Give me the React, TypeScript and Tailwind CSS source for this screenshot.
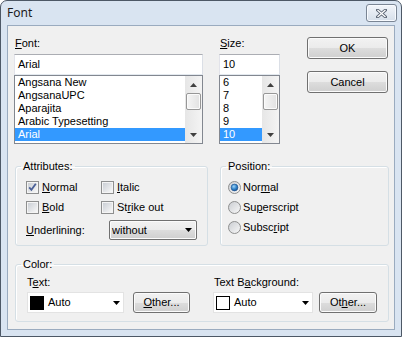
import React from 'react';

function U({ children }: { children: React.ReactNode }) {
  return <span className="underline decoration-1 underline-offset-[1px]">{children}</span>;
}

function Arrow({ dir = 'down' }: { dir?: 'up' | 'down' }) {
  return (
    <svg width="7" height="4" viewBox="0 0 7 4">
      {dir === 'up' ? <path d="M3.5 0 L7 4 L0 4 Z" fill="#404040" /> : <path d="M0 0 L7 0 L3.5 4 Z" fill="#000" />}
    </svg>
  );
}

function ScrollBar() {
  return (
    <div className="w-[17px] flex flex-col bg-[linear-gradient(to_right,#e6e6e6,#f4f4f4)]">
      <div className="h-[17px] flex items-center justify-center">
        <Arrow dir="up" />
      </div>
      <div className="flex-1 px-[1px]">
        <div className="h-[17px] rounded-[2px] border border-[#979797] bg-[linear-gradient(to_right,#f5f5f5,#e2e2e2)] shadow-[inset_0_0_0_1px_#fbfbfb]" />
      </div>
      <div className="h-[17px] flex items-center justify-center">
        <svg width="7" height="4" viewBox="0 0 7 4">
          <path d="M0 0 L7 0 L3.5 4 Z" fill="#404040" />
        </svg>
      </div>
    </div>
  );
}

function ListBox({ items, selected, width }: { items: string[]; selected: string; width: string }) {
  return (
    <div className={`${width} h-[69px] border border-[#828790] bg-white flex`}>
      <div className="flex-1 pt-0 pl-0">
        {items.map((it) => (
          <div
            key={it}
            className={`h-[13px] leading-[13px] pl-[3px] whitespace-nowrap ${
              it === selected ? 'bg-[#3399ff] text-white' : ''
            }`}
          >
            {it}
          </div>
        ))}
      </div>
      <ScrollBar />
    </div>
  );
}

function Button({ children, width, height = 'h-[22px]' }: { children: React.ReactNode; width: string; height?: string }) {
  return (
    <div
      className={`${width} ${height} flex items-center justify-center rounded-[3px] border border-[#707070] bg-[linear-gradient(#f2f2f2_0%,#ebebeb_50%,#dddddd_50%,#cfcfcf_100%)] shadow-[inset_0_0_0_1px_#fbfbfb]`}
    >
      {children}
    </div>
  );
}

function CheckBox({ checked = false }: { checked?: boolean }) {
  return (
    <svg width="13" height="13" viewBox="0 0 13 13">
      <defs>
        <linearGradient id="cbg" x1="0" y1="0" x2="1" y2="1">
          <stop offset="0" stopColor="#cbcfd5" />
          <stop offset="1" stopColor="#f7f7f7" />
        </linearGradient>
      </defs>
      <rect x="0.5" y="0.5" width="12" height="12" fill="#f4f4f4" stroke="#8e8f8f" />
      <rect x="2" y="2" width="9" height="9" fill="url(#cbg)" />
      {checked && <path d="M3.2 6.3 L5.4 8.8 L9.8 2.8" stroke="#4a5f97" strokeWidth="1.8" fill="none" />}
    </svg>
  );
}

function Radio({ checked = false }: { checked?: boolean }) {
  return (
    <svg width="13" height="13" viewBox="0 0 13 13">
      <defs>
        <linearGradient id="rbg" x1="0" y1="0" x2="1" y2="1">
          <stop offset="0" stopColor="#c9ccd1" />
          <stop offset="1" stopColor="#f9f9f9" />
        </linearGradient>
        <radialGradient id="rsel" cx="0.4" cy="0.35" r="0.7">
          <stop offset="0" stopColor="#9fd4f7" />
          <stop offset="0.6" stopColor="#2c7fc6" />
          <stop offset="1" stopColor="#1b4f8d" />
        </radialGradient>
      </defs>
      <circle cx="6.5" cy="6.5" r="6" fill="url(#rbg)" stroke="#8e8f8f" />
      {checked && <circle cx="6.5" cy="6.5" r="3.4" fill="url(#rsel)" stroke="#1b4f8d" strokeWidth="0.6" />}
    </svg>
  );
}

function Group({ label, className, children }: { label: string; className: string; children: React.ReactNode }) {
  return (
    <fieldset className={`${className} border border-[#d5dfe5] rounded-[3px] shadow-[inset_1px_1px_0_#fff] px-0`}>
      <legend className="ml-[5px] px-[2px] h-[13px] leading-[13px]">{label}</legend>
      {children}
    </fieldset>
  );
}

function ColorCombo({ width, swatch }: { width: string; swatch: string }) {
  return (
    <div className={`${width} h-[21px] flex items-center bg-white border border-[#e3e3e3] pl-[2px] pr-[3px]`}>
      <div className={`w-[14px] h-[14px] ${swatch}`} />
      <span className="ml-[4px] flex-1">Auto</span>
      <Arrow />
    </div>
  );
}

export default function App() {
  return (
    <div className="w-[402px] h-[337px] flex flex-col rounded-t-[7px] border border-[#4d5866] bg-[#d9e4f1] font-['Liberation_Sans',Arial,sans-serif] text-[11px] text-black">
      {/* Title bar */}
      <div className="h-[24px] flex items-center justify-between pl-[6px] pr-[4px]">
        <span className="font-['Noto_Sans',sans-serif] text-[12px] text-[#1b1b1b]">Font</span>
        <div className="w-[31px] h-[18px] flex items-center justify-center rounded-[3px] border border-[#7a8594] bg-[linear-gradient(#f2f5fa,#d6dfea)] shadow-[inset_0_0_0_1px_#f8fbff]">
          <svg width="11" height="9" viewBox="0 0 11 9">
            <path d="M1.5 1 L9.5 8 M9.5 1 L1.5 8" stroke="#5a6474" strokeWidth="3" strokeLinecap="square" />
            <path d="M1.5 1 L9.5 8 M9.5 1 L1.5 8" stroke="#fff" strokeWidth="1.3" />
          </svg>
        </div>
      </div>

      {/* Client area */}
      <div className="flex-1 mx-[6px] mb-[6px] border border-[#9aabbf] bg-[#f0f0f0] flex flex-col">
        {/* Font / Size / Buttons */}
        <div className="flex pl-[6px]">
          <div className="w-[189px] pt-[11px]">
            <div className="h-[13px] leading-[13px] pl-[1px]">
              <U>F</U>ont:
            </div>
            <div className="mt-[4px] h-[21px] flex items-center pl-[3px] bg-white border border-[#abadb3] border-b-[#e3e9ef] border-l-[#e2e3ea] border-r-[#dbdfe6]">
              Arial
            </div>
            <ListBox
              width="w-[189px]"
              selected="Arial"
              items={['Angsana New', 'AngsanaUPC', 'Aparajita', 'Arabic Typesetting', 'Arial']}
            />
          </div>
          <div className="ml-[16px] w-[61px] pt-[11px]">
            <div className="h-[13px] leading-[13px] pl-[1px]">
              <U>S</U>ize:
            </div>
            <div className="mt-[4px] h-[21px] flex items-center pl-[3px] bg-white border border-[#abadb3] border-b-[#e3e9ef] border-l-[#e2e3ea] border-r-[#dbdfe6]">
              10
            </div>
            <ListBox width="w-[61px]" selected="10" items={['6', '7', '8', '9', '10']} />
          </div>
          <div className="ml-[27px] w-[81px] pt-[11px]">
            <Button width="w-[81px]">OK</Button>
            <div className="mt-[12px]">
              <Button width="w-[81px]">Cancel</Button>
            </div>
          </div>
        </div>

        {/* Attributes / Position */}
        <div className="flex pl-[7px] mt-[16px]">
          <Group label="Attributes:" className="w-[193px] h-[86px]">
            <div className="pl-[10px] pt-[8px]">
              <div className="flex h-[13px] items-center">
                <div className="w-[75px] flex items-center">
                  <CheckBox checked />
                  <span className="ml-[3px]"><U>N</U>ormal</span>
                </div>
                <div className="flex items-center">
                  <CheckBox />
                  <span className="ml-[3px]"><U>I</U>talic</span>
                </div>
              </div>
              <div className="flex h-[13px] items-center mt-[7px]">
                <div className="w-[75px] flex items-center">
                  <CheckBox />
                  <span className="ml-[3px]"><U>B</U>old</span>
                </div>
                <div className="flex items-center">
                  <CheckBox />
                  <span className="ml-[3px]">St<U>r</U>ike out</span>
                </div>
              </div>
              <div className="flex items-center mt-[6px]">
                <span className="w-[83px]"><U>U</U>nderlining:</span>
                <div className="w-[88px] h-[20px] flex items-center justify-between pl-[2px] pr-[4px] rounded-[2px] border border-[#707070] bg-[linear-gradient(#f2f2f2_0%,#ebebeb_50%,#dddddd_50%,#cfcfcf_100%)] shadow-[inset_0_0_0_1px_#fbfbfb]">
                  <span>without</span>
                  <Arrow />
                </div>
              </div>
            </div>
          </Group>
          <Group label="Position:" className="ml-[12px] w-[169px] h-[86px]">
            <div className="pl-[7px] pt-[8px] flex flex-col gap-[7px]">
              <div className="flex h-[13px] items-center">
                <Radio checked />
                <span className="ml-[2px]">Nor<U>m</U>al</span>
              </div>
              <div className="flex h-[13px] items-center">
                <Radio />
                <span className="ml-[2px]">Su<U>p</U>erscript</span>
              </div>
              <div className="flex h-[13px] items-center">
                <Radio />
                <span className="ml-[2px]">Subsc<U>r</U>ipt</span>
              </div>
            </div>
          </Group>
        </div>

        {/* Color */}
        <div className="flex pl-[7px] mt-[12px]">
          <Group label="Color:" className="w-[374px] h-[64px]">
            <div className="flex pl-[11px] pt-[5px]">
              <div>
                <div className="h-[13px] leading-[13px]">T<U>e</U>xt:</div>
                <div className="flex items-center mt-[3px]">
                  <ColorCombo width="w-[97px]" swatch="bg-black" />
                  <div className="ml-[9px]">
                    <Button width="w-[57px]" height="h-[21px]">
                      <span><U>O</U>ther...</span>
                    </Button>
                  </div>
                </div>
              </div>
              <div className="ml-[23px]">
                <div className="h-[13px] leading-[13px] pl-[1px]">Text B<U>a</U>ckground:</div>
                <div className="flex items-center mt-[3px]">
                  <ColorCombo width="w-[100px]" swatch="bg-white border border-black" />
                  <div className="ml-[6px]">
                    <Button width="w-[58px]" height="h-[21px]">
                      <span>Ot<U>h</U>er...</span>
                    </Button>
                  </div>
                </div>
              </div>
            </div>
          </Group>
        </div>
      </div>
    </div>
  );
}
